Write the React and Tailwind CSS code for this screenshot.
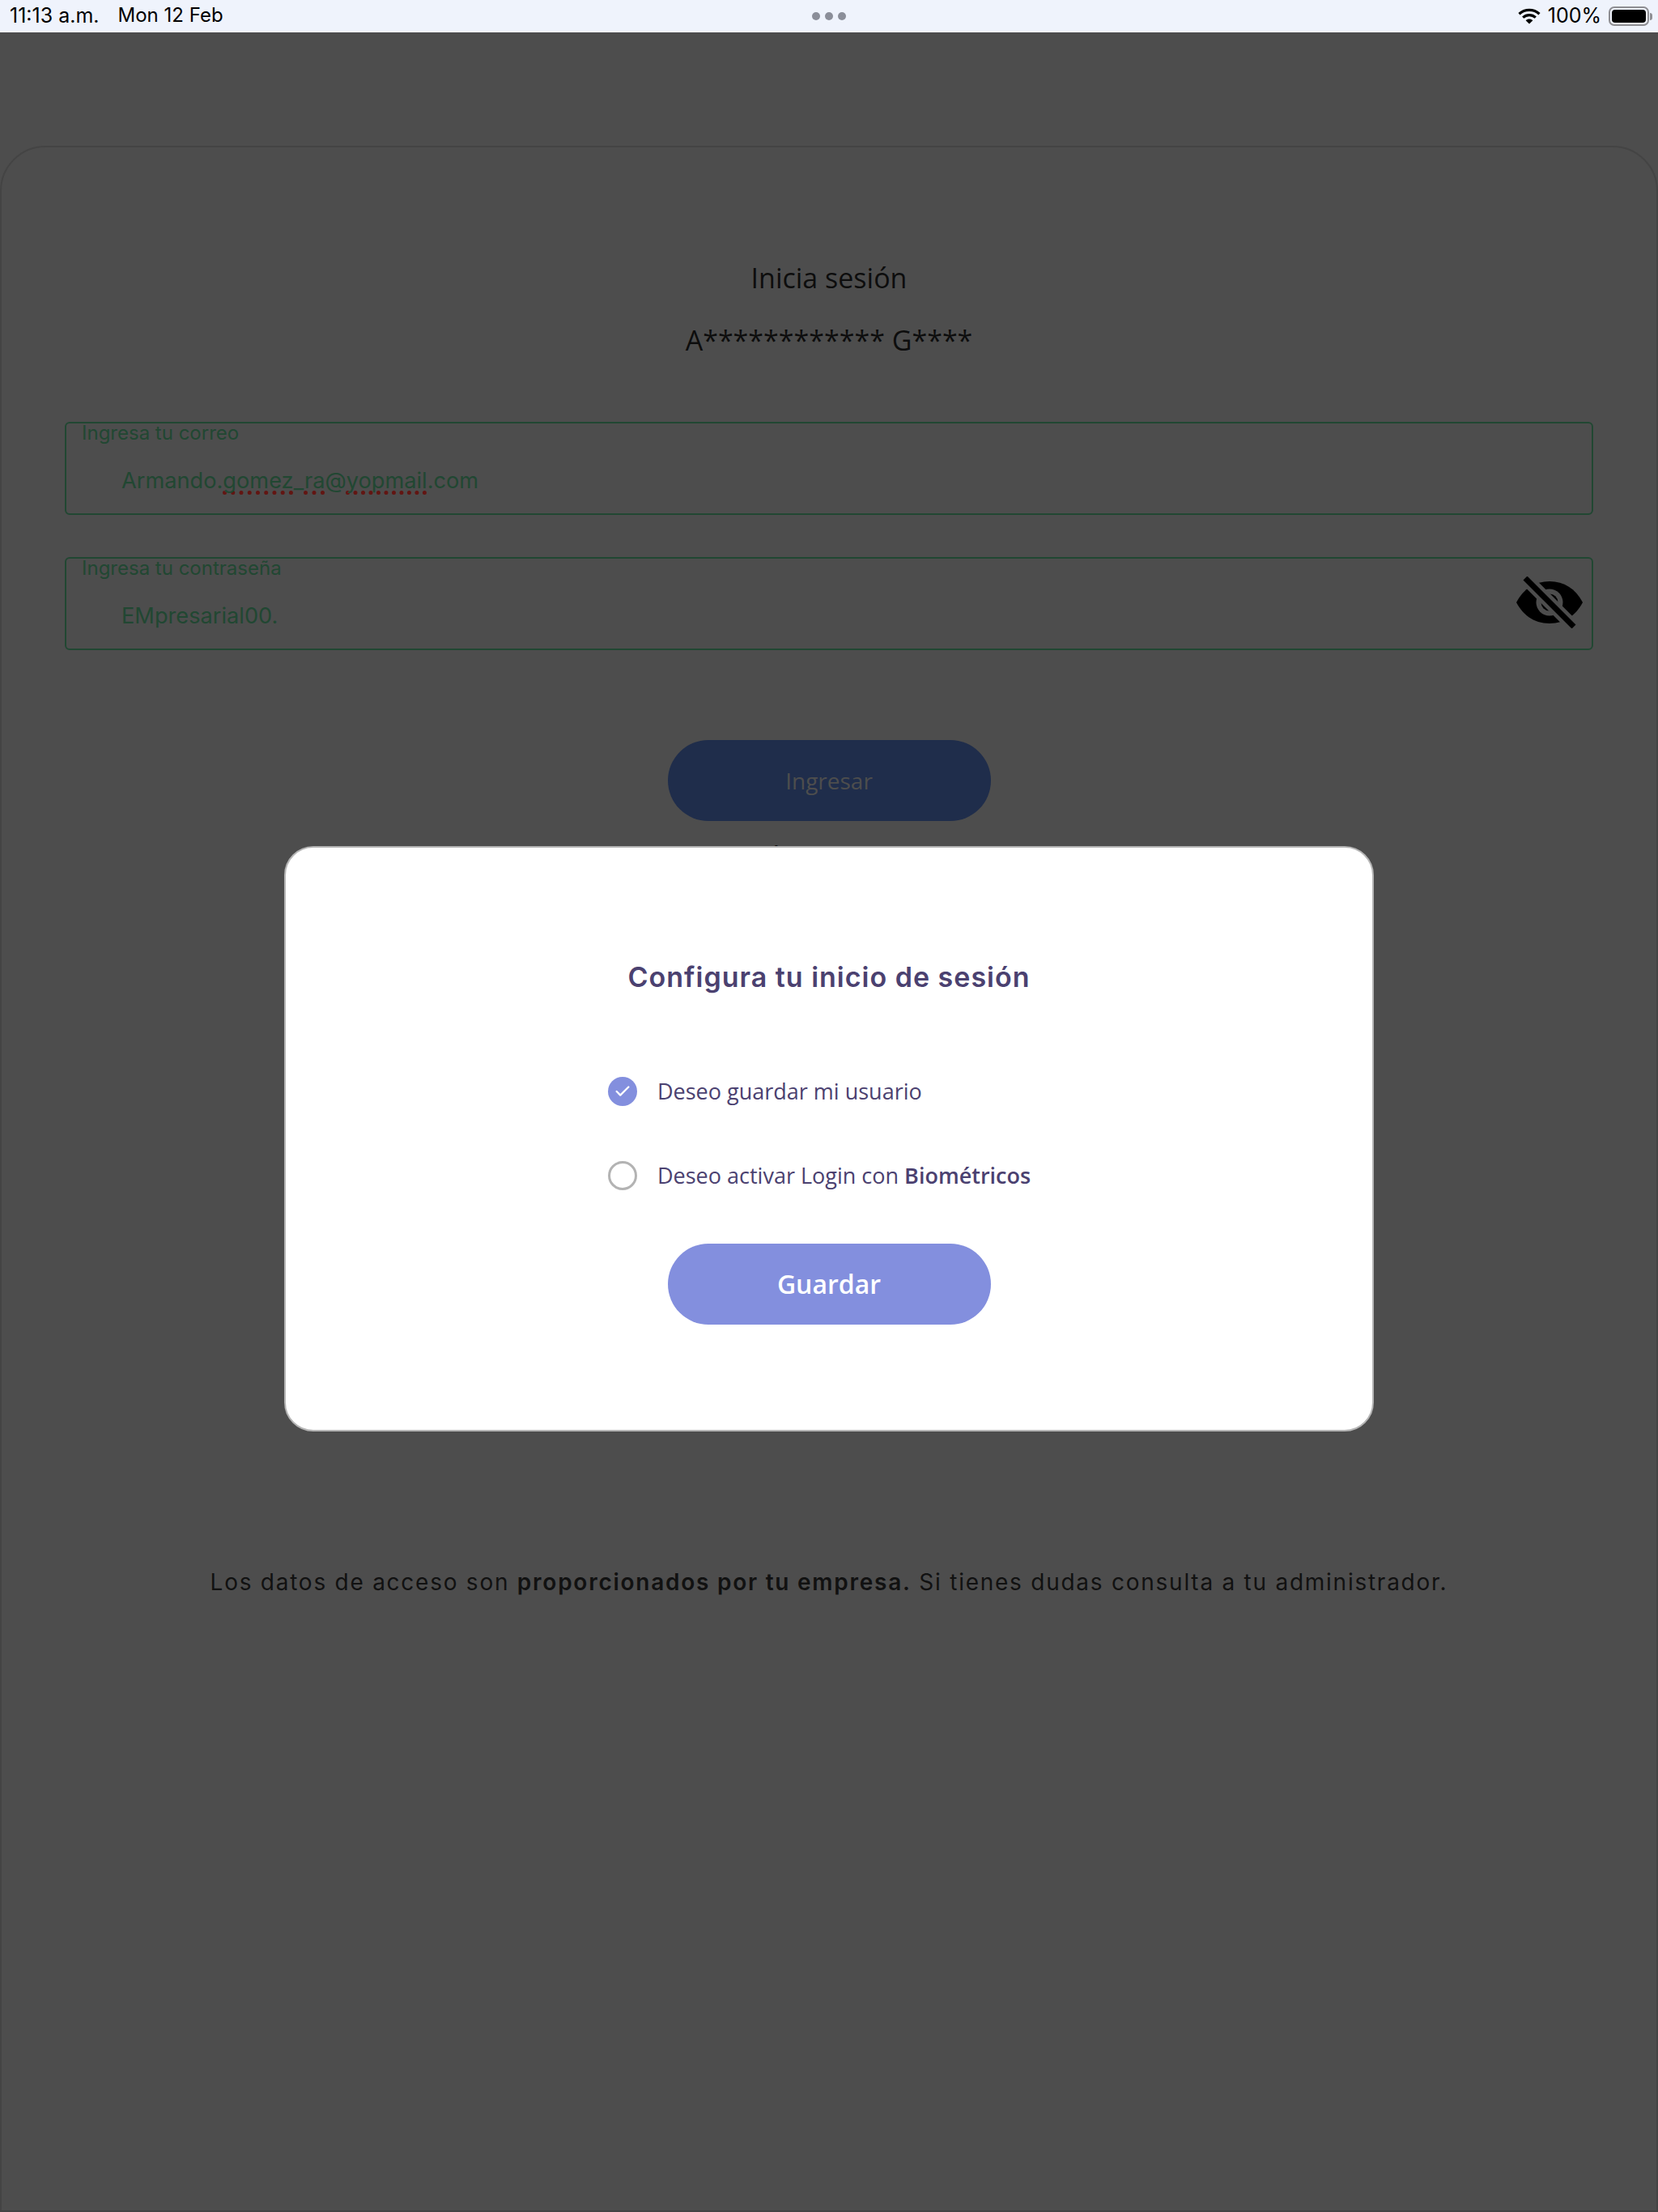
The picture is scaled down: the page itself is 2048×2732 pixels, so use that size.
import { Check } from "lucide-react";

function Wifi() {
  return (
    <svg viewBox="0 0 28 20" className="w-[28px] h-[20px]" fill="none" stroke="#000" strokeWidth="3.2">
      <path d="M1.5 7.2C8.5 .8 19.5 .8 26.5 7.2" />
      <path d="M6.2 11.6c4.4-4 11.2-4 15.6 0" />
      <path d="M14 19.5 9.6 15.2c2.4-2.2 6.4-2.2 8.8 0z" fill="#000" stroke="none" />
    </svg>
  );
}

function EyeOff() {
  return (
    <svg viewBox="0 0 84 64" className="w-[84px] h-[64px]">
      <path d="M1 32C10 15 24 6 42 6s32 9 41 26C74 49 60 58 42 58S10 49 1 32z" fill="#000" />
      <circle cx="42" cy="32" r="16.5" fill="#4d4d4d" />
      <circle cx="42" cy="32" r="10.5" fill="#000" />
      <path d="M11 1l62 62" stroke="#4d4d4d" strokeWidth="16" />
      <path d="M12 2l60 60" stroke="#000" strokeWidth="7" />
    </svg>
  );
}

function Field({ label, children, icon }) {
  return (
    <div className="relative h-[115px] border-2 border-[#214732] rounded-[6px] pl-[19px] text-[#214732] font-['Inter',sans-serif]">
      <div className="text-[24px] leading-[24px]">{label}</div>
      <div className="text-[27.2px] leading-[36px] mt-[29px] pl-[49px]">{children}</div>
      {icon && <div className="absolute right-[10px] top-[22px]">{icon}</div>}
    </div>
  );
}

const misspelled = "underline decoration-dotted decoration-[#621512] decoration-[5px] underline-offset-[3px] [text-decoration-skip-ink:none]";

export default function App() {
  return (
    <div className="relative h-[2732px] overflow-hidden flex flex-col bg-[#4d4d4d]">
      {/* status bar */}
      <div className="relative h-[40px] shrink-0 bg-[#eff3fc] flex items-center justify-between pl-[12px] pr-[7px] text-[24px] text-black font-['Inter',sans-serif]">
        <div className="flex gap-[23px]">
          <span className="text-[25px]">11:13 a.m.</span>
          <span>Mon 12 Feb</span>
        </div>
        <div className="absolute left-[1003px] top-[15px] flex gap-[6px]">
          <span className="w-[10px] h-[10px] rounded-full bg-[#8b8e99]"></span>
          <span className="w-[10px] h-[10px] rounded-full bg-[#8b8e99]"></span>
          <span className="w-[10px] h-[10px] rounded-full bg-[#8b8e99]"></span>
        </div>
        <div className="flex items-center gap-[9px]">
          <Wifi />
          <span className="text-[25px]">100%</span>
          <div className="flex items-center gap-[1px]">
            <div className="w-[50px] h-[24px] border-2 border-[#8e8e93] rounded-[7px] p-[2px]">
              <div className="w-full h-full bg-black rounded-[4px]"></div>
            </div>
            <div className="w-[3px] h-[9px] bg-[#8e8e93] rounded-r-full"></div>
          </div>
        </div>
      </div>

      {/* login card, dimmed */}
      <div className="flex-1 mt-[140px] border-2 border-[#444444] rounded-t-[56px] flex flex-col font-['Open_Sans',sans-serif] text-[#0d0d0d]">
        <div className="mt-[138px] text-center text-[34px] leading-[46px]">Inicia sesión</div>
        <div className="mt-[31px] text-center text-[34px] leading-[46px]">A************ G****</div>

        <div className="mt-[78px] mx-[78px] flex flex-col gap-[52px]">
          <Field label="Ingresa tu correo">
            Armando.<span className={misspelled}>gomez</span>_<span className={misspelled}>ra</span>@<span className={misspelled}>yopmail</span>.com
          </Field>
          <Field label="Ingresa tu contraseña" icon={<EyeOff />}>
            EMpresarial00.
          </Field>
        </div>

        <button className="self-center mt-[111px] w-[399px] h-[100px] rounded-full bg-[#1f2d4b] text-[#4d4d4d] text-[28px]">
          Ingresar
        </button>
        <div className="mt-[23px] text-center text-[30px] leading-[38px]">Olvidé mi contraseña</div>

        <p className="mt-[861px] text-center text-[28px] leading-[36px] tracking-[1.75px] text-[#111111] font-['Inter',sans-serif]">
          Los datos de acceso son <span className="font-semibold">proporcionados por tu empresa.</span> Si tienes dudas consulta a tu administrador.
        </p>
      </div>

      {/* modal */}
      <div className="absolute left-[351px] top-[1045px] w-[1346px] h-[723px] bg-white border-2 border-[#b5b5b5] rounded-[36px] flex flex-col items-center font-['Open_Sans',sans-serif] text-[#4b4170]">
        <h2 className="mt-[137px] text-[34px] leading-[46px] tracking-[1px] font-semibold font-['Inter',sans-serif]">Configura tu inicio de sesión</h2>

        <div className="self-start ml-[398px] mt-[100px] flex flex-col gap-[68px]">
          <div className="flex items-center gap-[25px] h-[36px]">
            <span className="w-[36px] h-[36px] rounded-full bg-[#838fde] flex items-center justify-center">
              <Check size={22} strokeWidth={2.5} color="#fff" />
            </span>
            <span className="text-[27px]">Deseo guardar mi usuario</span>
          </div>
          <div className="flex items-center gap-[25px] h-[36px]">
            <span className="w-[36px] h-[36px] rounded-full border-[3px] border-[#b3b3b3]"></span>
            <span className="text-[27px]">Deseo activar Login con <span className="font-semibold">Biométricos</span></span>
          </div>
        </div>

        <button className="mt-[66px] w-[399px] h-[100px] rounded-full bg-[#838fde] text-white text-[32px] font-semibold">
          Guardar
        </button>
      </div>
    </div>
  );
}
